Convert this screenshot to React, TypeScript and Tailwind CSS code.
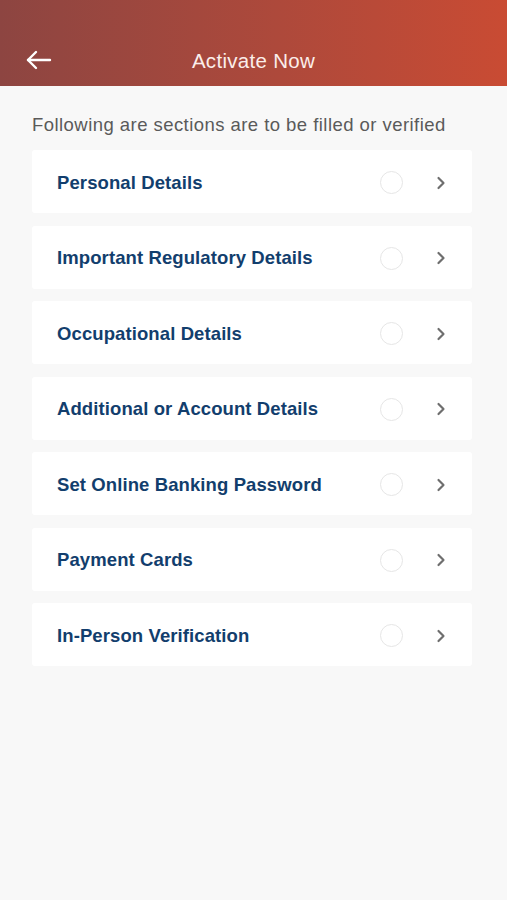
import { ChevronRight } from 'lucide-react';

const sections = [
  'Personal Details',
  'Important Regulatory Details',
  'Occupational Details',
  'Additional or Account Details',
  'Set Online Banking Password',
  'Payment Cards',
  'In-Person Verification',
];

const App = () => {
  return (
    <div className="min-h-[900px] w-[507px] bg-[#f8f8f8]" style={{ fontFamily: '"Liberation Sans", Arial, sans-serif' }}>
      <div className="h-[86px] bg-gradient-to-r from-[#8d4541] to-[#c94b33] pt-[36px]">
        <div className="relative flex h-[50px] items-center justify-center">
          <svg
            className="absolute left-[25px] top-[13px]"
            width="27"
            height="22"
            viewBox="0 0 27 22"
            fill="none"
            stroke="white"
            strokeWidth="2.4"
            strokeLinecap="round"
            strokeLinejoin="round"
          >
            <path d="M25 11H3" />
            <path d="M11 3L3 11l8 8" />
          </svg>
          <span className="text-[20.5px] tracking-[0.3px] text-[#fbeeea]">Activate Now</span>
        </div>
      </div>

      <div className="px-[32px] pt-[27px]">
        <p className="text-[18.5px] leading-[24px] tracking-[0.45px] text-[#5a5a5a]">
          Following are sections are to be filled or verified
        </p>
        <div className="mt-[13px] flex w-[440px] flex-col gap-[12.5px]">
          {sections.map((title) => (
            <div key={title} className="flex h-[63px] items-center rounded-[3px] bg-white pl-[25px] pr-[21px] pt-[2px]">
              <span className="flex-1 text-[18.5px] font-bold tracking-[0.1px] text-[#123e6d]">{title}</span>
              <span className="mr-[28px] h-[23px] w-[23px] rounded-full border-[1.5px] border-[#e6e6e6]" />
              <ChevronRight className="h-[20px] w-[20px] text-[#6e6e6e]" strokeWidth={2.6} />
            </div>
          ))}
        </div>
      </div>
    </div>
  );
};

export default App;
